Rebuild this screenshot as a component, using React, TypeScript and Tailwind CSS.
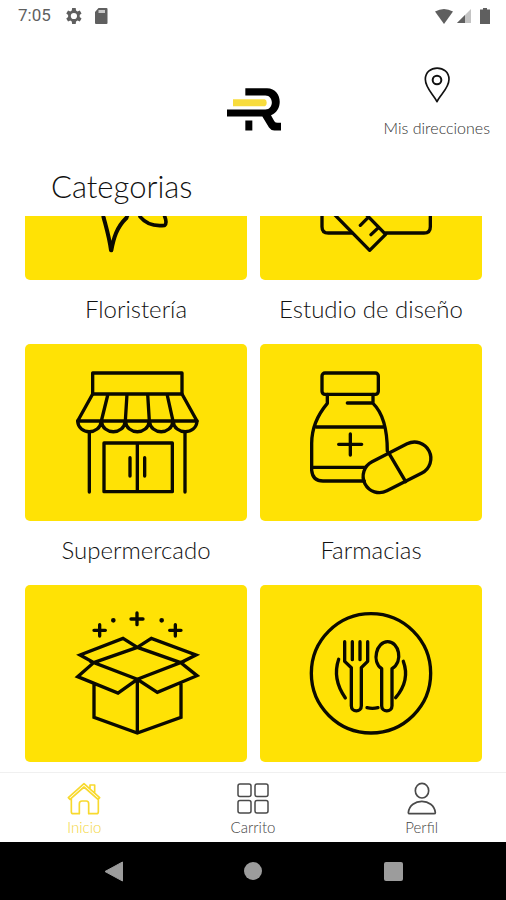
import { useLayoutEffect, useRef } from "react";
import type { ReactNode } from "react";

function Art({ viewBox, children }: { viewBox: string; children: ReactNode }) {
  return (
    <svg
      viewBox={viewBox}
      className="h-full w-full"
      fill="none"
      stroke="#0b0a00"
      strokeWidth="10"
      strokeLinecap="round"
      strokeLinejoin="round"
      aria-hidden="true"
    >
      {children}
    </svg>
  );
}

const Flower = () => (
  <Art viewBox="75 -141 666 531">
    <path d="M408 30C350 10 330-30 408-60C486-30 466 10 408 30Z" />
    <path d="M311 203C318 230 328 262 333 301M334 301C341 264 350 232 379 204" strokeWidth="12" />
    <path d="M300 170L311 203M379 204L408 150" />
    <path d="M420 200C438 222 464 230 494 226C500 221 499 212 494 199" strokeWidth="11" />
  </Art>
);

const Design = () => (
  <Art viewBox="21 -141 666 531">
    <path d="M297 249H226Q207 249 207 230V40H532V230Q532 249 513 249H398" />
    <path d="M180 128L350 301L398 253L228 80ZM322 226L345 203M354 254L377 232" />
  </Art>
);

const Store = () => (
  <Art viewBox="30 12 666 531">
    <path d="M233 162V99H501V162" />
    <path d="M233 162H501L546 243H188ZM279 162L259 243M336 162L331 243M398 162L403 243M456 162L474 243" />
    <path d="M188 243C190 286 255 286 259 243C263 286 327 286 331 243C335 286 399 286 403 243C407 286 470 286 474 243C478 286 544 286 546 243" />
    <path d="M223 278V456M510 278V456M267 309H472V455H267ZM367 309V455M345 353V408M389 353V408" />
  </Art>
);

const Pharmacy = () => (
  <Art viewBox="15 12 666 531">
    <rect x="201" y="99" width="169" height="64" rx="9" />
    <path d="M217 163V190C190 222 170 262 170 310V391Q173 423 204 423H328M354 163V190C384 219 397 265 397 334M354 189H277M184 261H386M170 382H330" />
    <path d="M286 282V345M251 313H320" />
    <rect x="318" y="333" width="216" height="98" rx="49" transform="rotate(-27 426 382)" />
    <path d="M402 340L452 425" />
  </Art>
);

const OpenBox = () => (
  <Art viewBox="30 165 666 531">
    <path d="M367 352L236 398L367 448L497 398ZM367 352L324 325L195 375L236 398L188 440L309 489L367 448L427 487L546 437L497 398L543 375L409 325ZM237 462V562L367 609L498 562V462M367 448V609" strokeLinejoin="miter" />
    <path d="M366 249V284M348 267H384M254 284V318M237 301H271M481 284V318M464 301H498" />
    <circle cx="295" cy="271" r="4" fill="#0b0a00" strokeWidth="6" />
    <circle cx="440" cy="271" r="4" fill="#0b0a00" strokeWidth="6" />
  </Art>
);

const Plate = () => (
  <Art viewBox="15 165 666 531">
    <circle cx="348" cy="430" r="179" />
    <path d="M269 335V394L289 413V527C289 548 319 548 319 527V413L338 394V335M292 335V389M315 335V389" />
    <path d="M380 527V416C349 395 364 335 398 335C432 335 446 395 411 416V527C411 548 380 548 380 527Z" />
    <path d="M251 388Q231 447 271 504M445 394Q466 451 422 503M336 533Q352 537 369 533" />
  </Art>
);

const categories: { name: string; label: string; art: ReactNode }[] = [
  { name: "Floristería", label: "Floristería", art: <Flower /> },
  { name: "Estudio de diseño", label: "Estudio de diseño", art: <Design /> },
  { name: "Supermercado", label: "Supermercado", art: <Store /> },
  { name: "Farmacias", label: "Farmacias", art: <Pharmacy /> },
  { name: "caja", label: "", art: <OpenBox /> },
  { name: "plato", label: "", art: <Plate /> },
];

function StatusBar() {
  return (
    <div className="flex h-8 shrink-0 items-center justify-between pr-4 pl-[18px] text-[#5f5f5f]">
      <div className="flex items-center">
        <span className="w-12 font-['Roboto',sans-serif] text-[17px]">7:05</span>
        <svg viewBox="4 3 18 18" className="h-4 w-4" fill="currentColor" aria-hidden="true">
          <path
            fillRule="evenodd"
            d="M19.4 13a7.800 7.800 0 0 0 0-2l2.100-1.700-2-3.500-2.500 1a8 8 0 0 0-1.700-1L14.900 3h-4l-.4 2.800a8 8 0 0 0-1.700 1l-2.500-1-2 3.500L6.400 11a7.800 7.800 0 0 0 0 2l-2.100 1.700 2 3.500 2.500-1a8 8 0 0 0 1.700 1l.4 2.800h4l.4-2.800a8 8 0 0 0 1.700-1l2.500 1 2-3.500zM12.900 8.500a3.500 3.500 0 1 1 0 7 3.500 3.500 0 0 1 0-7z"
          />
        </svg>
        <svg viewBox="0 0 14 16" className="ml-3 h-4 w-3.5" aria-hidden="true">
          <path d="M4.500 0H12.500Q13.500 0 13.500 1V15Q13.500 16 12.500 16H2Q1 16 1 15V4Z" fill="currentColor" />
          <path d="M4.500 2H11V5H4.500Z" fill="#c8c8c8" />
        </svg>
      </div>
      <div className="flex items-center">
        <svg viewBox="0 0 18 15" className="h-[15px] w-[18px]" aria-hidden="true">
          <path d="M0 2.500Q9-2.500 18 2.500L9 15Z" fill="currentColor" />
        </svg>
        <svg viewBox="0 0 14 14" className="ml-1 h-3.5 w-3.5" aria-hidden="true">
          <path d="M0 14L14 0V14Z" fill="#c4c4c4" />
          <path d="M0 14L8 6V14Z" fill="currentColor" />
        </svg>
        <svg viewBox="0 0 10 16" className="ml-[9px] h-4 w-2.5" aria-hidden="true">
          <path d="M3 0H7V1.500H10V16H0V1.500H3Z" fill="currentColor" />
        </svg>
      </div>
    </div>
  );
}

function Header() {
  return (
    <header className="grid shrink-0 grid-cols-[1fr_auto_1fr] items-start px-4 pt-8">
      <span />
      <svg viewBox="36 29 162 128" className="mt-6 ml-0.5 h-[43px] w-[54px]" role="img" aria-label="R">
        <path d="M91 29H156C202 29 207 96 168 110L178 128Q181 133 188 133H198V156H178Q168 156 162 147L142 114H36V93H151C177 93 177 51 151 51H91Z" fill="#000" />
        <path d="M54 62H149Q155 63 155 72Q155 82 149 83H54Z" fill="#f8dc3c" />
        <path d="M91 126H112V156H91Z" fill="#000" />
      </svg>
      <button type="button" className="flex flex-col items-center justify-self-end">
        <svg viewBox="508 200 78 108" className="mt-[3px] h-9 w-[26px]" fill="none" stroke="#111" strokeWidth="5" strokeLinejoin="round" aria-hidden="true">
          <path d="M547 304C537 283 512 264 512 237C512 192 583 192 583 237C583 264 557 283 547 304Z" />
          <circle cx="547" cy="239" r="13" strokeWidth="6" />
        </svg>
        <span className="mt-[15px] text-base leading-5 font-light text-[#333]">Mis direcciones</span>
      </button>
    </header>
  );
}

function TabBar() {
  return (
    <nav className="grid h-[70px] shrink-0 grid-cols-3 border-t border-[#f0f0f0] bg-white text-[15px] leading-4 font-light text-[#444]">
      <button type="button" className="flex flex-col items-center pt-[9px] text-[#f3d63c]">
        <svg viewBox="203 65 102 99" className="h-[33px] w-[34px]" fill="none" stroke="#f8d92e" strokeWidth="5" strokeLinecap="round" strokeLinejoin="round" aria-hidden="true">
          <path d="M207 112L254 70L301 112L296 117L254 80L212 117ZM272 86V74H286V98M216 114V154Q216 160 222 160H240V130Q240 122 248 122H261Q268 122 268 130V160H291Q297 160 297 154V114" />
        </svg>
        <span className="mt-1">Inicio</span>
      </button>
      <button type="button" className="flex flex-col items-center pt-[9px]">
        <svg viewBox="0 0 34 33" className="h-[33px] w-[34px]" fill="none" stroke="#4a4a4a" strokeWidth="1.500" aria-hidden="true">
          <rect x="2" y="2" width="13" height="12.500" rx="2" />
          <rect x="19" y="2" width="13" height="12.500" rx="2" />
          <rect x="2" y="18.500" width="13" height="12.500" rx="2" />
          <rect x="19" y="18.500" width="13" height="12.500" rx="2" />
        </svg>
        <span className="mt-1">Carrito</span>
      </button>
      <button type="button" className="flex flex-col items-center pt-[9px]">
        <svg viewBox="460 65 102 99" className="h-[33px] w-[34px]" fill="none" stroke="#4a4a4a" strokeWidth="5" strokeLinejoin="round" aria-hidden="true">
          <ellipse cx="511" cy="91" rx="20" ry="22" />
          <path d="M470 157C474 112 547 112 551 157Q551 160 547 160H474Q470 160 470 157Z" />
        </svg>
        <span className="mt-1">Perfil</span>
      </button>
    </nav>
  );
}

function SystemBar() {
  return (
    <div className="flex h-[58px] shrink-0 items-center justify-center bg-black">
      <button type="button" aria-label="Atrás" className="flex w-[140px] justify-center">
        <svg viewBox="0 0 19 21" className="h-[21px] w-[19px]" aria-hidden="true">
          <path d="M18.500 1V20L1 10.500Z" fill="#9c9c9c" stroke="#9c9c9c" strokeLinejoin="round" />
        </svg>
      </button>
      <button type="button" aria-label="Inicio del sistema" className="flex w-[140px] justify-center">
        <span className="size-[18px] rounded-full bg-[#9c9c9c]" />
      </button>
      <button type="button" aria-label="Recientes" className="flex w-[140px] justify-center">
        <span className="size-[19px] rounded-xs bg-[#9c9c9c]" />
      </button>
    </div>
  );
}

export default function App() {
  const list = useRef<HTMLElement>(null);

  useLayoutEffect(() => {
    if (list.current) list.current.scrollTop = list.current.scrollHeight;
  }, []);

  return (
    <div className="flex h-screen flex-col bg-white font-['Lato',sans-serif] text-[#111]">
      <StatusBar />
      <Header />
      <h1 className="shrink-0 pt-[30px] pb-3 pl-[51px] text-[31px] leading-9 font-light">Categorias</h1>
      <main
        ref={list}
        className="grid min-h-0 flex-1 grid-cols-2 content-start gap-x-[13px] overflow-y-auto pr-6 pb-2.5 pl-[25px] [scrollbar-width:none]"
      >
        {categories.map((c) => (
          <button key={c.name} type="button" aria-label={c.name} className="flex flex-col">
            <span className="h-[177px] w-full rounded-[5px] bg-[#ffe205]">{c.art}</span>
            {c.label && (
              <span className="flex h-16 w-full items-center justify-center pb-1.5 text-2xl leading-7 font-light whitespace-nowrap">
                {c.label}
              </span>
            )}
          </button>
        ))}
      </main>
      <TabBar />
      <SystemBar />
    </div>
  );
}
